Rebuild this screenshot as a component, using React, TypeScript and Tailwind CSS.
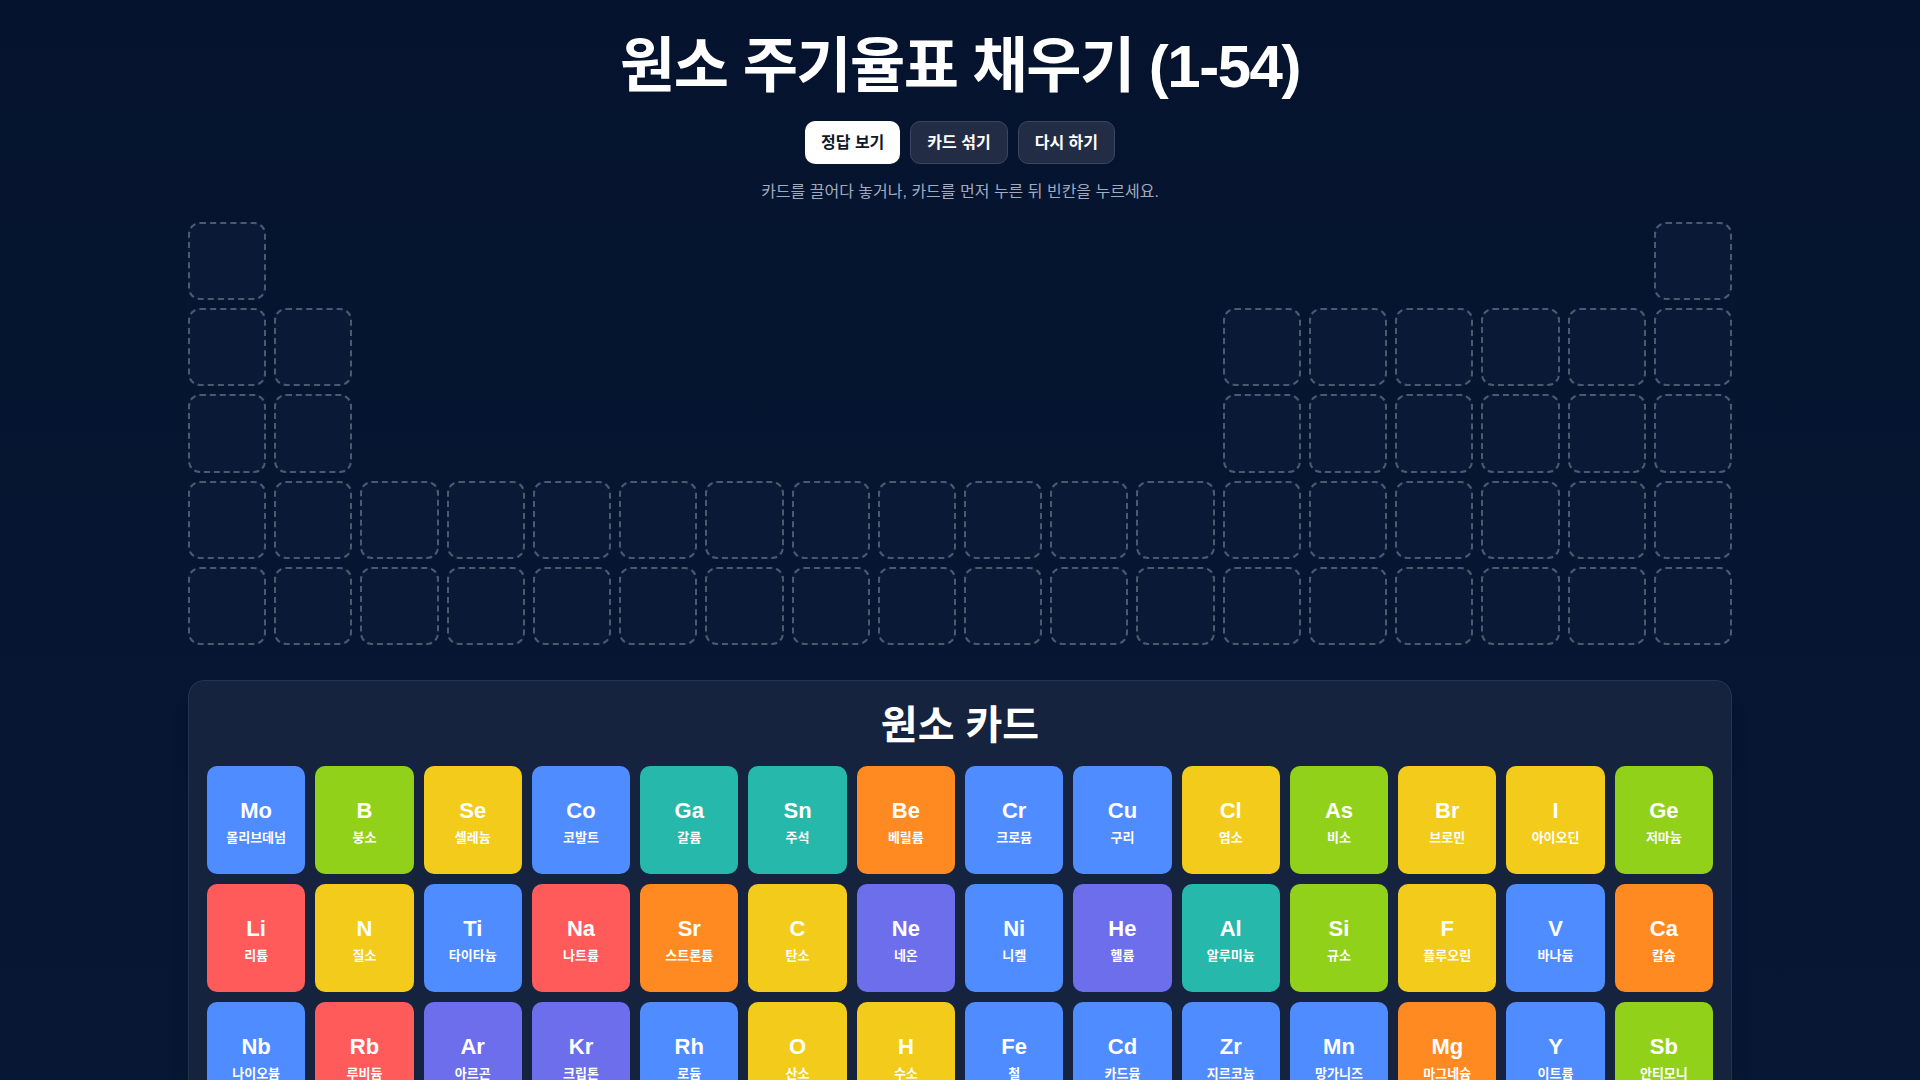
import { useState } from 'react';

type Category = 'alkali' | 'alkaline' | 'transition' | 'post' | 'metalloid' | 'nonmetal' | 'noble';

interface ElementCard {
  symbol: string;
  name: string;
  category: Category;
}

const categoryColors: Record<Category, string> = {
  alkali: 'bg-[#ff5b5b]',
  alkaline: 'bg-[#ff8a22]',
  transition: 'bg-[#4f8cff]',
  post: 'bg-[#26b8ab]',
  metalloid: 'bg-[#92d11a]',
  nonmetal: 'bg-[#f2cb1b]',
  noble: 'bg-[#6d6eec]',
};

const cards: ElementCard[] = [
  { symbol: 'Mo', name: '몰리브데넘', category: 'transition' },
  { symbol: 'B', name: '붕소', category: 'metalloid' },
  { symbol: 'Se', name: '셀레늄', category: 'nonmetal' },
  { symbol: 'Co', name: '코발트', category: 'transition' },
  { symbol: 'Ga', name: '갈륨', category: 'post' },
  { symbol: 'Sn', name: '주석', category: 'post' },
  { symbol: 'Be', name: '베릴륨', category: 'alkaline' },
  { symbol: 'Cr', name: '크로뮴', category: 'transition' },
  { symbol: 'Cu', name: '구리', category: 'transition' },
  { symbol: 'Cl', name: '염소', category: 'nonmetal' },
  { symbol: 'As', name: '비소', category: 'metalloid' },
  { symbol: 'Br', name: '브로민', category: 'nonmetal' },
  { symbol: 'I', name: '아이오딘', category: 'nonmetal' },
  { symbol: 'Ge', name: '저마늄', category: 'metalloid' },

  { symbol: 'Li', name: '리튬', category: 'alkali' },
  { symbol: 'N', name: '질소', category: 'nonmetal' },
  { symbol: 'Ti', name: '타이타늄', category: 'transition' },
  { symbol: 'Na', name: '나트륨', category: 'alkali' },
  { symbol: 'Sr', name: '스트론튬', category: 'alkaline' },
  { symbol: 'C', name: '탄소', category: 'nonmetal' },
  { symbol: 'Ne', name: '네온', category: 'noble' },
  { symbol: 'Ni', name: '니켈', category: 'transition' },
  { symbol: 'He', name: '헬륨', category: 'noble' },
  { symbol: 'Al', name: '알루미늄', category: 'post' },
  { symbol: 'Si', name: '규소', category: 'metalloid' },
  { symbol: 'F', name: '플루오린', category: 'nonmetal' },
  { symbol: 'V', name: '바나듐', category: 'transition' },
  { symbol: 'Ca', name: '칼슘', category: 'alkaline' },

  { symbol: 'Nb', name: '나이오븀', category: 'transition' },
  { symbol: 'Rb', name: '루비듐', category: 'alkali' },
  { symbol: 'Ar', name: '아르곤', category: 'noble' },
  { symbol: 'Kr', name: '크립톤', category: 'noble' },
  { symbol: 'Rh', name: '로듐', category: 'transition' },
  { symbol: 'O', name: '산소', category: 'nonmetal' },
  { symbol: 'H', name: '수소', category: 'nonmetal' },
  { symbol: 'Fe', name: '철', category: 'transition' },
  { symbol: 'Cd', name: '카드뮴', category: 'transition' },
  { symbol: 'Zr', name: '지르코늄', category: 'transition' },
  { symbol: 'Mn', name: '망가니즈', category: 'transition' },
  { symbol: 'Mg', name: '마그네슘', category: 'alkaline' },
  { symbol: 'Y', name: '이트륨', category: 'transition' },
  { symbol: 'Sb', name: '안티모니', category: 'metalloid' },

  { symbol: 'P', name: '인', category: 'nonmetal' },
  { symbol: 'Xe', name: '제논', category: 'noble' },
  { symbol: 'Zn', name: '아연', category: 'transition' },
  { symbol: 'K', name: '칼륨', category: 'alkali' },
  { symbol: 'Tc', name: '테크네튬', category: 'transition' },
  { symbol: 'Ag', name: '은', category: 'transition' },
  { symbol: 'Sc', name: '스칸듐', category: 'transition' },
  { symbol: 'S', name: '황', category: 'nonmetal' },
  { symbol: 'Ru', name: '루테늄', category: 'transition' },
  { symbol: 'In', name: '인듐', category: 'post' },
  { symbol: 'Pd', name: '팔라듐', category: 'transition' },
  { symbol: 'Te', name: '텔루륨', category: 'metalloid' },
];

// which of the 18 columns hold a slot, per period
function hasSlot(period: number, group: number) {
  if (period === 1) return group === 1 || group === 18;
  if (period === 2 || period === 3) return group <= 2 || group >= 13;
  return true;
}

const periods = [1, 2, 3, 4, 5];
const groups = Array.from({ length: 18 }, (_, i) => i + 1);

export default function App() {
  const [selected, setSelected] = useState<string | null>(null);

  return (
    <div className="min-h-screen bg-[#06142f] bg-gradient-to-b from-[#05132e] to-[#081834] text-white font-['Liberation_Sans','Noto_Sans_CJK_KR',sans-serif]">
      <div className="max-w-[1600px] mx-auto px-7 pt-[31px] pb-10">
        <h1 className="text-center text-[60px] leading-[72px] font-bold tracking-tight">
          원소 주기율표 채우기 (1-54)
        </h1>

        <div className="mt-[18px] flex justify-center gap-2.5">
          <button className="h-[43px] px-4 rounded-[10px] bg-white text-[#0f172a] text-base font-bold">
            정답 보기
          </button>
          <button className="h-[43px] px-4 rounded-[10px] bg-[#222d45] border border-[#3a4660] text-white text-base font-bold">
            카드 섞기
          </button>
          <button className="h-[43px] px-4 rounded-[10px] bg-[#222d45] border border-[#3a4660] text-white text-base font-bold">
            다시 하기
          </button>
        </div>

        <p className="mt-[17px] text-center text-base leading-[22px] text-[#a0abbf]">
          카드를 끌어다 놓거나, 카드를 먼저 누른 뒤 빈칸을 누르세요.
        </p>

        <div className="mt-[19px] grid grid-cols-[repeat(18,minmax(0,1fr))] gap-2">
          {periods.map(p =>
            groups.map(g =>
              hasSlot(p, g) ? (
                <div
                  key={`${p}-${g}`}
                  className="aspect-square rounded-xl border-2 border-dashed border-[#4d596e] bg-[#0a1936]"
                />
              ) : (
                <div key={`${p}-${g}`} className="aspect-square" />
              )
            )
          )}
        </div>

        <div className="mt-[35px] rounded-2xl border border-[#27344f] bg-[#15233f] px-[18px] pt-[22px] pb-[18px] shadow-xl">
          <h2 className="text-center text-[40px] leading-[44px] font-bold">원소 카드</h2>
          <div className="mt-[19px] grid grid-cols-[repeat(14,minmax(0,1fr))] gap-2.5">
            {cards.map(card => (
              <button
                key={card.symbol}
                onClick={() => setSelected(card.symbol === selected ? null : card.symbol)}
                className={`h-[108px] pt-1 rounded-[10px] flex flex-col items-center justify-center text-white ${categoryColors[card.category]} ${
                  selected === card.symbol ? 'ring-4 ring-white' : ''
                }`}
              >
                <span className="text-[22px] leading-[26px] font-bold">{card.symbol}</span>
                <span className="mt-1.5 text-[13px] leading-4 font-semibold">{card.name}</span>
              </button>
            ))}
          </div>
        </div>
      </div>
    </div>
  );
}
